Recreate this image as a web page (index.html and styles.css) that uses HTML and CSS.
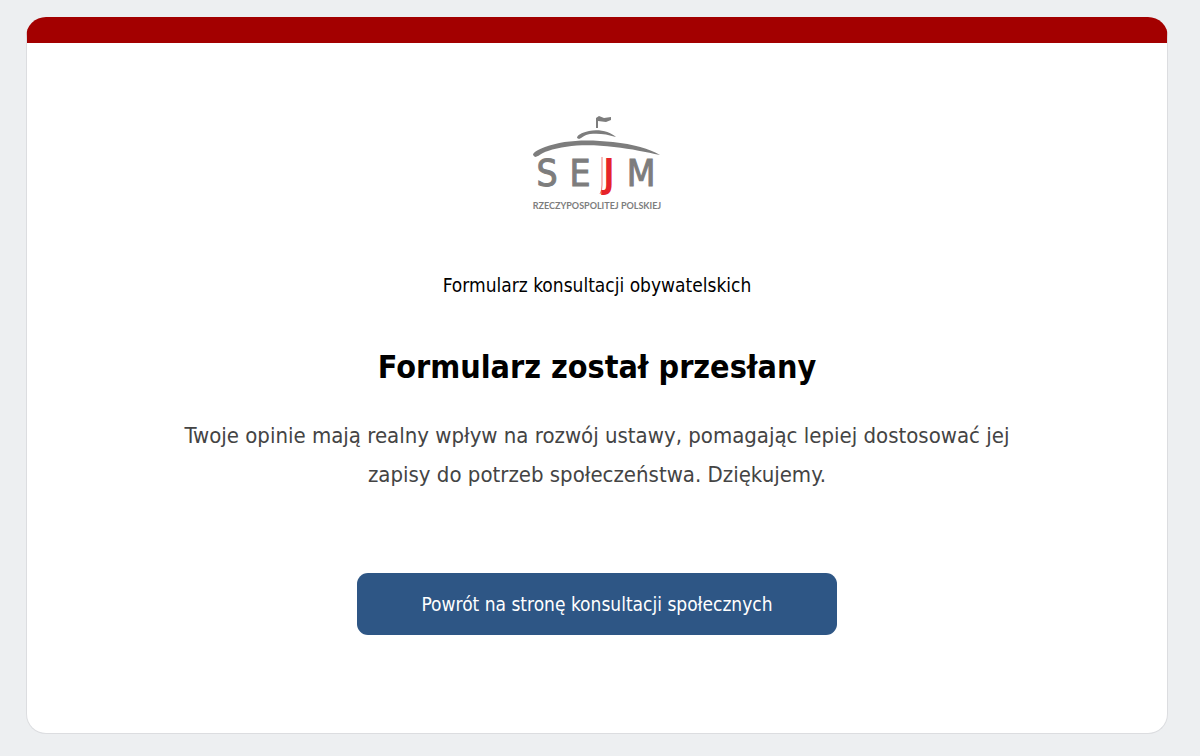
FILE: index.html
```
<!DOCTYPE html>
<html lang="pl">
  <head>
    <meta charset="UTF-8">
    <meta name="viewport" content="width=device-width, initial-scale=1">
    <title>Formularz konsultacji obywatelskich</title>
    <link rel="stylesheet" href="styles.css">
  </head>
  <body>
    <main class="card">
      <svg class="logo" viewBox="0 0 130 100" role="img" aria-label="Sejm Rzeczypospolitej Polskiej">
        <!-- flag -->
        <path class="roof" d="M64 4 L67 2 L72 4 L79 3 L79 6 L74 8 L66 7 L66 14 L64 14 Z"/>
        <!-- dome and roof -->
        <path class="roof" d="M45 24 C45 21 49 19 57 17 C68 15 78 18 84 23 C75 20 66 19 58 20 C52 21 50 24 47 25 Z"/>
        <path class="roof" d="M1 41 C1 38 6 36 13 33 C31 26 55 25 81 28 C101 30 118 35 128 41 C114 38 100 35 82 33 C56 30 34 31 16 37 C9 39 6 43 3 43 Z"/>
        <text class="letter" x="15" y="72">S</text>
        <text class="letter" x="48" y="72">E</text>
        <path class="line" d="M70 43 V71 Q70 77 68 80"/>
        <text class="letter letter-j" x="77" y="72">J</text>
        <text class="letter" x="109" y="72">M</text>
        <text class="caption" x="65" y="95">RZECZYPOSPOLITEJ POLSKIEJ</text>
      </svg>
      <p class="subtitle">Formularz konsultacji obywatelskich</p>
      <h1>Formularz został przesłany</h1>
      <p class="message">Twoje opinie mają realny wpływ na rozwój ustawy, pomagając lepiej dostosować jej zapisy do potrzeb społeczeństwa. Dziękujemy.</p>
      <a class="button" href="#">Powrót na stronę konsultacji społecznych</a>
    </main>
  </body>
</html>
```

FILE: styles.css
```
* {
  box-sizing: border-box;
}

body {
  margin: 0;
  padding: 17px 32px 22px 26px;
  background-color: #edeff1;
  color: #000;
  font-family: Tahoma, "DejaVu Sans Condensed", "DejaVu Sans", sans-serif;
}

.card {
  display: flex;
  flex-direction: column;
  align-items: center;
  padding: 71px 24px 98px;
  background-color: #fff;
  border: 1px solid #dcdde0;
  border-top: 26px solid #a30000;
  border-radius: 20px;
  text-align: center;
}

.logo {
  width: 130px;
  height: 100px;
}

.roof {
  fill: #7d7d7d;
}

.line {
  fill: none;
  stroke: #ef7a7a;
  stroke-width: 1;
}

.letter {
  fill: #7d7d7d;
  stroke: #7d7d7d;
  stroke-width: 1;
  font-family: "DejaVu Sans Condensed", sans-serif;
  font-size: 37px;
  text-anchor: middle;
}

.letter-j {
  fill: #e62329;
  stroke: #e62329;
  stroke-width: 2;
}

.caption {
  fill: #7d7d7d;
  font-family: Lato, sans-serif;
  font-size: 9px;
  font-weight: bold;
  text-anchor: middle;
}

.subtitle {
  margin: 55px 0 0;
  font-size: 19px;
  line-height: 32px;
}

h1 {
  margin: 41px 0 0;
  font-size: 32px;
  line-height: 50px;
}

.message {
  max-width: 860px;
  margin: 24px 0 0;
  color: #444;
  font-size: 22px;
  line-height: 39px;
}

.button {
  width: 100%;
  max-width: 480px;
  margin-top: 79px;
  padding: 16px;
  background-color: #2e5685;
  border-radius: 11px;
  color: #fff;
  font-size: 19px;
  line-height: 30px;
  text-decoration: none;
}

.button:hover {
  background-color: #264870;
}
```
